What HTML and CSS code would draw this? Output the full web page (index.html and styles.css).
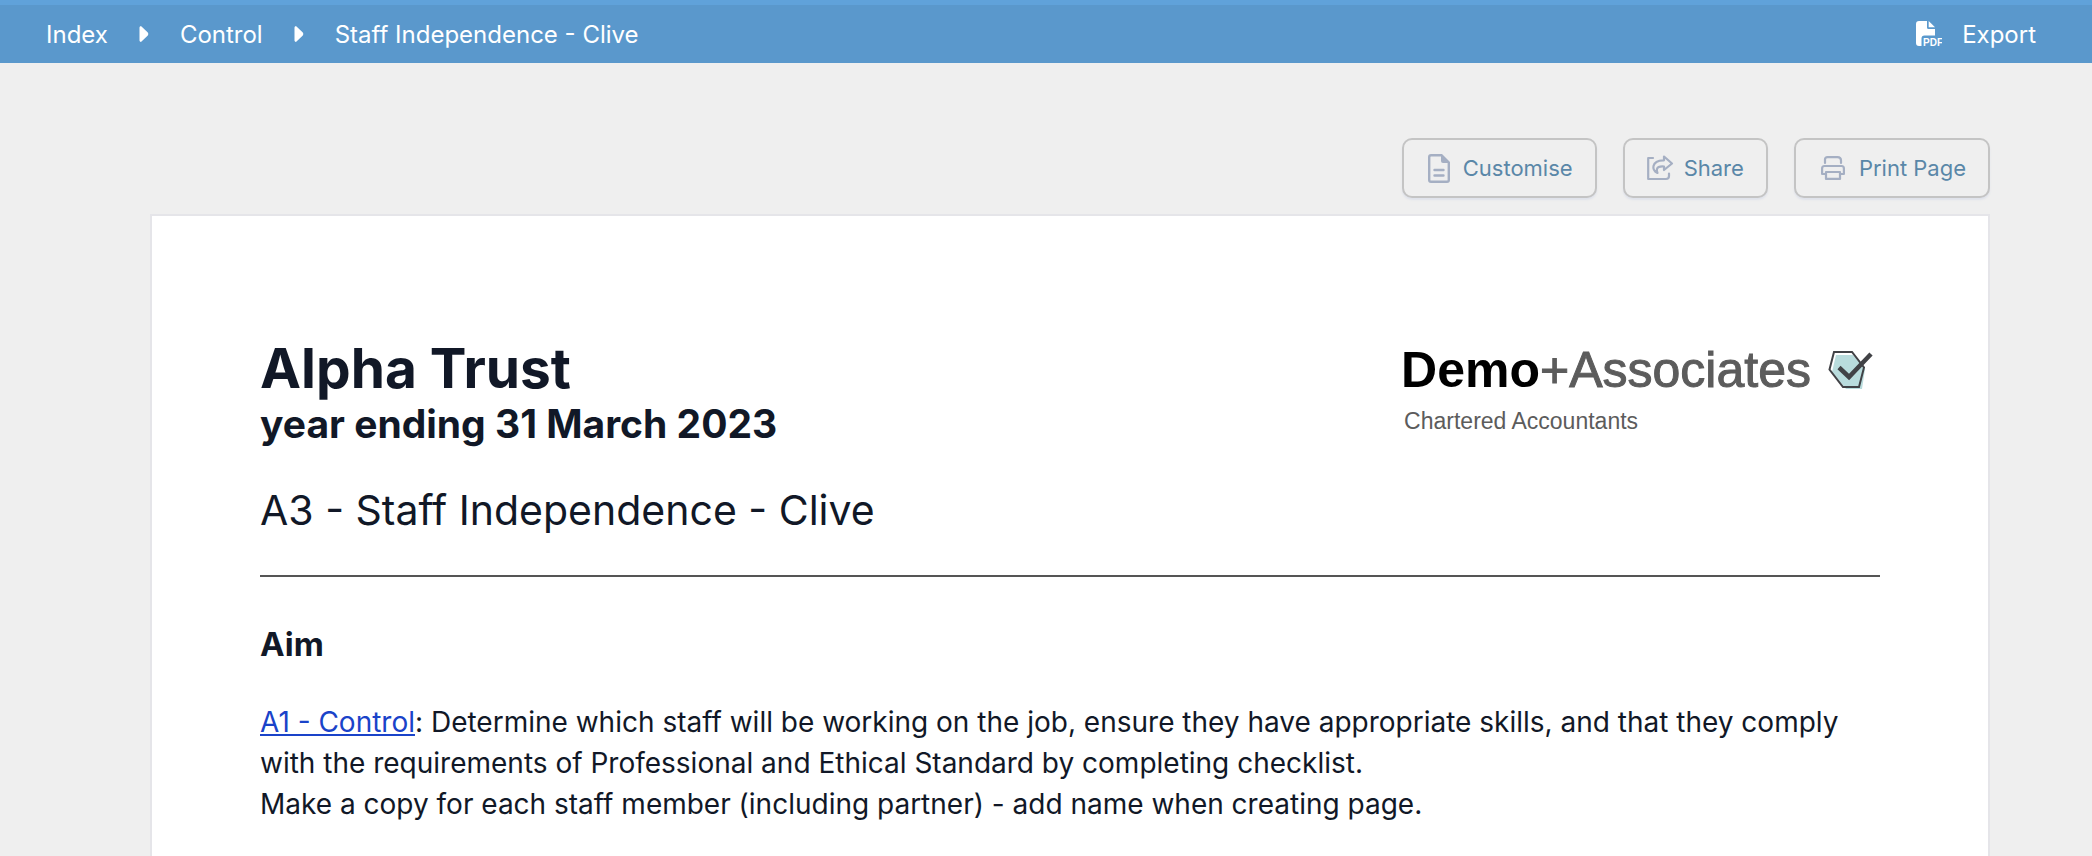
FILE: index.html
```html
<!DOCTYPE html>
<html lang="en">
<head>
    <meta charset="UTF-8">
    <meta name="viewport" content="width=device-width, initial-scale=1.0">
    <title>Staff Independence - Clive</title>
    <link rel="stylesheet" href="styles.css">
</head>
<body>
    <header class="topbar">
        <nav class="breadcrumbs">
            <a href="#">Index</a>
            <svg class="caret" viewBox="0 0 10 18"><path d="M1.5 1.2Q1.8.8 2.5 1.4L8.8 7.6Q10 9 8.8 10.4L2.5 16.6Q1.8 17.2 1 16.6Q.5 16.2.5 15.5V2.5Q.5 1.5 1.5 1.2Z" fill="currentColor"/></svg>
            <a href="#">Control</a>
            <svg class="caret" viewBox="0 0 10 18"><path d="M1.5 1.2Q1.8.8 2.5 1.4L8.8 7.6Q10 9 8.8 10.4L2.5 16.6Q1.8 17.2 1 16.6Q.5 16.2.5 15.5V2.5Q.5 1.5 1.5 1.2Z" fill="currentColor"/></svg>
            <a href="#">Staff Independence - Clive</a>
        </nav>
        <button class="export" type="button">
            <svg class="export-icon" viewBox="0 0 26 26">
                <path d="M3 0H11V6.500Q11 8 12.500 8H19V14.500H8.500Q5.500 14.500 5.500 17.500V25H3Q0 25 0 22V3Q0 0 3 0Z" fill="currentColor"/>
                <path d="M12.700 0L19 6.300H12.700Z" fill="currentColor"/>
                <text x="7" y="25" class="pdf-label">PDF</text>
            </svg>
            Export
        </button>
    </header>

    <main class="container">
        <div class="toolbar">
            <button type="button">
                <svg class="icon" viewBox="0 0 22 29">
                    <path d="M14 1.200H3Q1.200 1.200 1.200 3V26Q1.200 27.800 3 27.800H19Q20.800 27.800 20.800 26V8" fill="none" stroke="currentColor" stroke-width="2.400"/>
                    <path d="M13 0H14L22 8V9H15Q13 9 13 7Z" fill="currentColor"/>
                    <path d="M6.500 16H15.500M6.500 21.500H15.500" stroke="currentColor" stroke-width="2.400" stroke-linecap="round"/>
                </svg>
                Customise
            </button>
            <button type="button">
                <svg class="icon icon-share" viewBox="0 0 26 26" fill="none" stroke="currentColor" stroke-width="2.200" stroke-linecap="round" stroke-linejoin="round">
                    <path d="M6 3H1.200V24H19Q22 24 22 21V18.500"/>
                    <path d="M17 1.500L25 8.500L17 15V11.500Q11 11 10 14Q9.500 16 10.500 18Q5.500 15.500 6.500 11Q8 5 17 5.300Z"/>
                </svg>
                Share
            </button>
            <button type="button">
                <svg class="icon icon-print" viewBox="0 0 24 24" fill="none" stroke="currentColor" stroke-width="2.200" stroke-linejoin="round">
                    <path d="M4 7V3.500Q4 1.100 6.500 1.100H16.500Q20 1.100 20 4.500V7" stroke-linecap="round"/>
                    <path d="M4 18H1.100V12.500Q1.100 10 3.500 10H20.500Q22.900 10 22.900 12.500V18H20"/>
                    <path d="M5 16H19V22.900H5Z"/>
                </svg>
                Print Page
            </button>
        </div>

        <article class="page">
            <div class="page-header">
                <div class="titles">
                    <h1>Alpha Trust</h1>
                    <p class="period">year ending 31 March 2023</p>
                    <h2>A3 - Staff Independence - Clive</h2>
                </div>
                <div class="brand">
                    <div class="brand-row">
                        <span class="brand-name"><b>Demo</b>+Associates</span>
                        <svg class="brand-mark" viewBox="0 0 46 40">
                            <path d="M8 5H25L37 19L34 39H18L4 22Z" fill="#b9dcdd"/>
                            <path d="M6 2H24L36 17.500L31 37H15L1.500 19.500Z" fill="none" stroke="#414246" stroke-width="2"/>
                            <path d="M11 17.500L21 27L43 4" fill="none" stroke="#414246" stroke-width="4.500"/>
                        </svg>
                    </div>
                    <p class="tagline">Chartered Accountants</p>
                </div>
            </div>
            <section>
                <h3>Aim</h3>
                <p><a href="#">A1 - Control</a>: Determine which staff will be working on the job, ensure they have appropriate skills, and that they comply with the requirements of Professional and Ethical Standard by completing checklist.</p>
                <p>Make a copy for each staff member (including partner) - add name when creating page.</p>
            </section>
        </article>
    </main>
</body>
</html>
```
FILE: styles.css
```css
* {
    box-sizing: border-box;
}
body {
    display: flex;
    flex-direction: column;
    min-height: 100vh;
    font-family: Inter, sans-serif;
    margin: 0;
    background-color: #efefef;
    color: #111827;
}
h1, h2, h3, p {
    margin: 0;
}
button {
    font-family: inherit;
    cursor: pointer;
}
.topbar {
    display: flex;
    justify-content: space-between;
    align-items: center;
    height: 63px;
    padding: 0 56px 0 46px;
    border-top: 5px solid #60a2da;
    background-color: #5a98cc;
    color: white;
    font-size: 24px;
}
.breadcrumbs {
    display: flex;
    align-items: center;
    gap: 31px;
}
.breadcrumbs a {
    color: inherit;
    text-decoration: none;
}
.caret {
    width: 10px;
    height: 18px;
}
.export {
    display: flex;
    align-items: center;
    gap: 20px;
    padding: 0;
    border: none;
    background: none;
    color: inherit;
    font-size: 24px;
}
.export-icon {
    width: 26px;
    height: 26px;
}
.pdf-label {
    font-family: "Liberation Sans", sans-serif;
    font-size: 10px;
    font-weight: bold;
    fill: white;
}
.container {
    display: flex;
    flex-direction: column;
    flex: 1;
    padding: 75px 102px 0 150px;
}
.toolbar {
    display: flex;
    justify-content: flex-end;
    gap: 26px;
    margin-bottom: 16px;
}
.toolbar button {
    display: flex;
    align-items: center;
    gap: 10px;
    height: 60px;
    padding: 0 22px 0 21px;
    border: 2px solid #c4c4c4;
    border-radius: 10px;
    background-color: #efefef;
    box-shadow: 0 2px 2px #dfe2ea;
    color: #5a87a8;
    font-size: 22px;
}
.icon {
    width: 28px;
    height: 29px;
    color: #a5afc3;
}
.icon-share {
    height: 26px;
}
.icon-print {
    width: 32px;
    height: 24px;
}
.page {
    flex: 1;
    padding: 120px 108px 0;
    border: 2px solid #e5e5e9;
    border-bottom: none;
    background-color: white;
}
.page-header {
    display: flex;
    justify-content: space-between;
    padding-bottom: 37px;
    border-bottom: 2px solid #555;
}
h1 {
    font-size: 55px;
    line-height: 64px;
}
.period {
    font-size: 39px;
    font-weight: bold;
    line-height: 48px;
}
h2 {
    margin-top: 34px;
    font-size: 41px;
    font-weight: normal;
    line-height: 56px;
}
.brand {
    padding: 6px 6px 0 0;
    font-family: "Liberation Sans", Arial, sans-serif;
    color: #5c5c5c;
}
.brand-row {
    display: flex;
    align-items: center;
    gap: 17px;
}
.brand-name {
    font-size: 50px;
    line-height: 56px;
    -webkit-text-stroke: 1px #5c5c5c;
}
.brand-name b {
    color: black;
    -webkit-text-stroke: 0;
}
.brand-mark {
    width: 46px;
    height: 40px;
}
.tagline {
    margin-top: 9px;
    padding-left: 3px;
    font-size: 23px;
    line-height: 28px;
}
section {
    padding-top: 47px;
    font-size: 28px;
    line-height: 41px;
}
h3 {
    margin-bottom: 38px;
    font-size: 33px;
    line-height: 40px;
}
section a {
    color: #1a43c9;
}
```
